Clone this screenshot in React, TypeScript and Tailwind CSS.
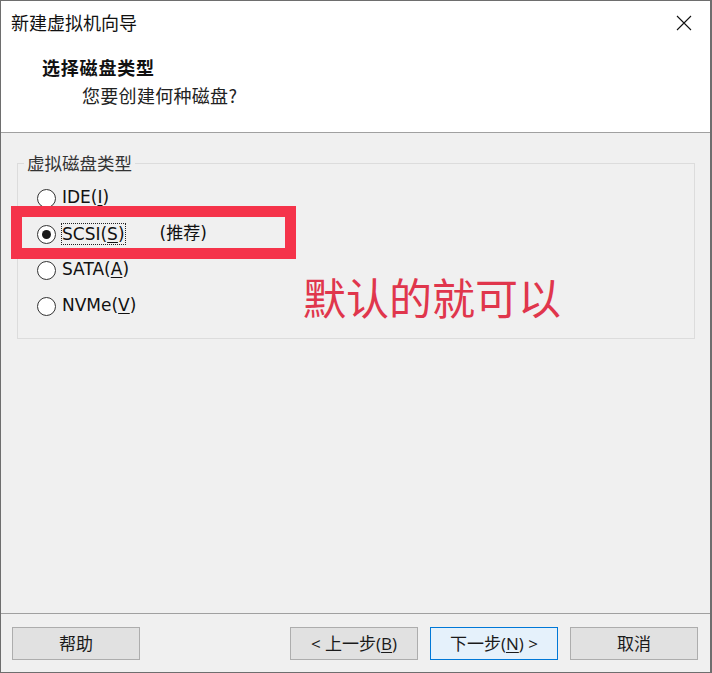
import React from 'react';

const FONT = "font-['Segoe_UI','Open_Sans','Noto_Sans_CJK_SC',sans-serif]";
const CJK = "font-['Noto_Sans_CJK_SC',sans-serif]";
const LABEL = "font-['DejaVu_Sans','Noto_Sans_CJK_SC',sans-serif]";

const OPTIONS = [
  { pre: 'IDE(', key: 'I', post: ')', checked: false },
  { pre: 'SCSI(', key: 'S', post: ')', checked: true, note: '(推荐)' },
  { pre: 'SATA(', key: 'A', post: ')', checked: false },
  { pre: 'NVMe(', key: 'V', post: ')', checked: false },
];

function Radio({ checked }: { checked: boolean }) {
  return (
    <span className="w-[19px] h-[19px] rounded-full border border-[#333333] bg-white flex items-center justify-center shrink-0">
      {checked && <span className="w-[9px] h-[9px] rounded-full bg-[#1a1a1a]" />}
    </span>
  );
}

function Button({ children, primary = false }: { children: React.ReactNode; primary?: boolean }) {
  return (
    <button
      className={
        'w-[128px] h-[33px] border text-[17px] text-[#1a1a1a] flex items-center justify-center ' +
        (primary ? 'border-[#0078d7] bg-[#e5f1fb]' : 'border-[#adadad] bg-[#e1e1e1]')
      }
    >
      {children}
    </button>
  );
}

export default function App() {
  return (
    <div className={`relative w-[712px] h-[673px] bg-[#f0f0f0] border border-[#6e6e6e] border-r-2 flex flex-col ${FONT}`}>
      {/* header */}
      <div className="h-[132px] bg-white border-b border-[#a0a0a0] flex flex-col">
        <div className="h-[43px] flex items-center justify-between pl-[10px] pr-[16px]">
          <span className={`text-[18px] text-[#111] ${CJK}`}>新建虚拟机向导</span>
          <svg width="16" height="16" viewBox="0 0 16 16" className="mr-[2px]">
            <path d="M1 1L15 15M15 1L1 15" stroke="#111" strokeWidth="1.1" />
          </svg>
        </div>
        <div className={`pl-[41px] mt-[10px] text-[18px] tracking-[0.8px] font-bold text-[#111] leading-[27px] ${CJK}`}>选择磁盘类型</div>
        <div className={`pl-[81px] mt-[1px] text-[18px] tracking-[0.3px] text-[#222] leading-[27px] ${CJK}`}>您要创建何种磁盘?</div>
      </div>

      {/* body */}
      <div className="flex-1 pt-[30px] pl-[16px] pr-[15px]">
        <div className="relative h-[176px] border border-[#dcdcdc] pt-[16px]">
          <span className={`absolute -top-[13px] left-[6px] px-[3px] bg-[#f0f0f0] text-[17.5px] text-[#333] leading-[24px] ${CJK}`}>
            虚拟磁盘类型
          </span>
          {OPTIONS.map((o) => (
            <div key={o.pre} className={`h-9 flex items-center pl-[19px] gap-[5px] text-[17px] text-[#111] ${LABEL}`}>
              <Radio checked={o.checked} />
              <span className={o.checked ? 'border border-dotted border-[#222] leading-[20px]' : 'px-[1px]'}>
                {o.pre}
                <span className="underline underline-offset-2">{o.key}</span>
                {o.post}
              </span>
              {o.note && <span className="ml-[29px]">{o.note}</span>}
            </div>
          ))}
        </div>
      </div>

      {/* footer */}
      <div className="h-[59px] border-t border-[#a0a0a0] flex items-start pt-[13px] pl-[11px] pr-[12px]">
        <Button>帮助</Button>
        <div className="flex-1" />
        <div className="flex gap-[12px]">
          <Button>
            &lt; 上一步(<span className="underline underline-offset-2">B</span>)
          </Button>
          <Button primary>
            下一步(<span className="underline underline-offset-2">N</span>) &gt;
          </Button>
          <Button>取消</Button>
        </div>
      </div>

      {/* annotations */}
      <div className="absolute left-[10px] top-[205px] w-[285px] h-[53px] border-[11px] border-[#f5334a]" />
      <div className={`absolute left-[302px] top-[267px] text-[43px] text-[#e0364c] leading-[56px] ${CJK}`}>默认的就可以</div>
    </div>
  );
}
